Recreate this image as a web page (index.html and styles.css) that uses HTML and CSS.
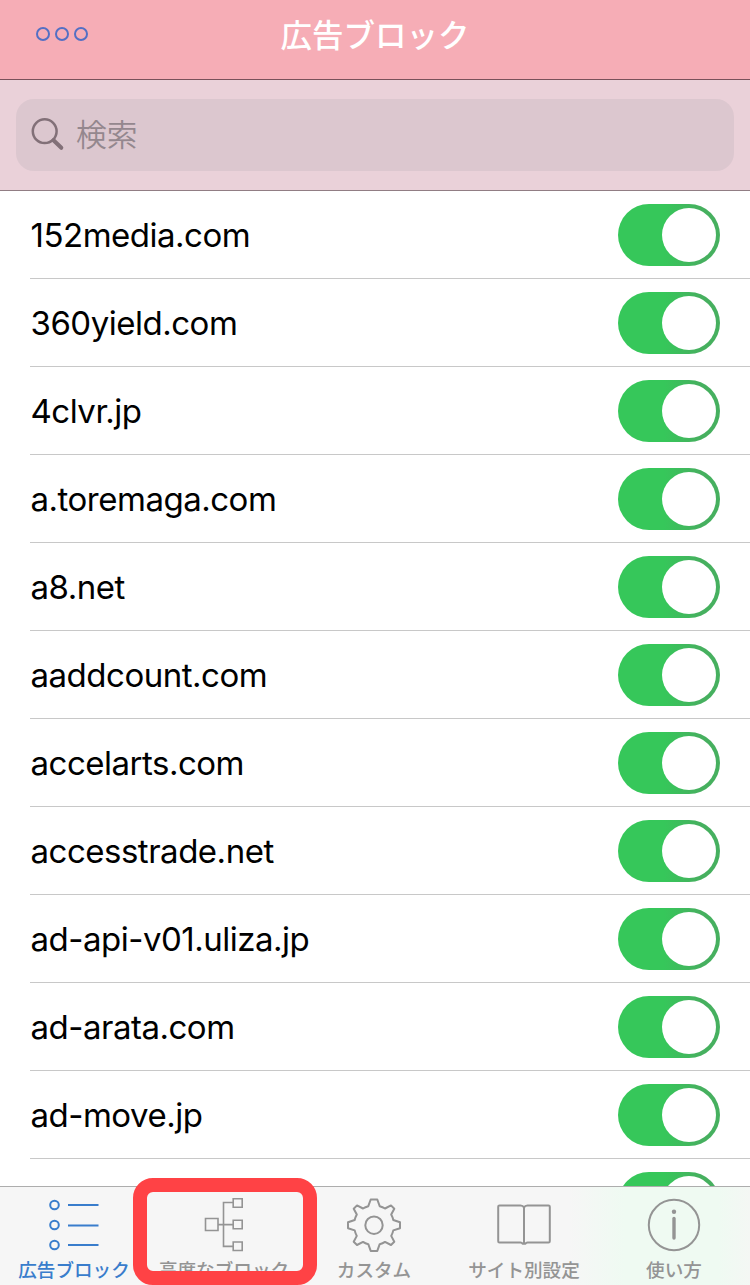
FILE: index.html
```html
<!DOCTYPE html>
<html lang="ja">
<head>
<meta charset="utf-8">
<title>広告ブロック</title>
<link rel="stylesheet" href="styles.css">
</head>
<body>
<div class="app">
  <header class="nav">
    <svg class="more" width="54" height="16" viewBox="0 0 54 16"><circle cx="8" cy="8" r="6"/><circle cx="27" cy="8" r="6"/><circle cx="46" cy="8" r="6"/></svg>
    <h1 class="title">広告ブロック</h1>
  </header>
  <div class="search">
    <div class="field">
      <svg class="glass" width="34" height="34" viewBox="0 0 34 34"><circle cx="13.7" cy="13.2" r="11.9"/><path class="handle" d="M22.5 22.2L30.3 29.8"/></svg>
      <span class="placeholder">検索</span>
    </div>
  </div>
  <main class="list">
    <div class="row"><span class="domain">152media.com</span><i class="toggle"></i></div>
    <div class="row"><span class="domain">360yield.com</span><i class="toggle"></i></div>
    <div class="row"><span class="domain">4clvr.jp</span><i class="toggle"></i></div>
    <div class="row"><span class="domain">a.toremaga.com</span><i class="toggle"></i></div>
    <div class="row"><span class="domain">a8.net</span><i class="toggle"></i></div>
    <div class="row"><span class="domain">aaddcount.com</span><i class="toggle"></i></div>
    <div class="row"><span class="domain">accelarts.com</span><i class="toggle"></i></div>
    <div class="row"><span class="domain">accesstrade.net</span><i class="toggle"></i></div>
    <div class="row"><span class="domain">ad-api-v01.uliza.jp</span><i class="toggle"></i></div>
    <div class="row"><span class="domain">ad-arata.com</span><i class="toggle"></i></div>
    <div class="row"><span class="domain">ad-move.jp</span><i class="toggle"></i></div>
    <div class="row"><span class="domain"></span><i class="toggle"></i></div>
  </main>
  <nav class="tabs">
    <div class="tab active">
      <svg class="icon" width="60" height="60" viewBox="0 0 60 60"><g><circle cx="10.5" cy="10" r="4.3"/><circle cx="10.5" cy="30" r="4.3"/><circle cx="10.5" cy="50" r="4.3"/><path d="M24 10H54.5M24 30.5H54.5M24 50H54.5"/></g></svg>
      <span class="label">広告ブロック</span>
    </div>
    <div class="tab">
      <svg class="icon thin" width="60" height="60" viewBox="0 0 60 60"><path d="M11.5 23.5h12.5v12H11.5zM39.2 3.8h9v8.5h-9zM39.2 25.3h9v8.5h-9zM39.2 47h9v8.5h-9zM24 29.6H39M39 7.5H29.5V51.4H39"/></svg>
      <span class="label">高度なブロック</span>
    </div>
    <div class="tab">
      <svg class="icon" width="60" height="60" viewBox="0 0 60 60"><g transform="translate(30 30.2)"><circle r="8.7"/><path d="M-3.3 -25.7H3.3L5.7 -19Q8.7 -18.2 11 -16.7L17 -19.8L20.3 -16.5L17.2 -10.7Q18.7 -8 19.3 -5.2L26 -3V3L19.3 5.2Q18.7 8 17.2 10.7L20.3 16.5L17 19.8L11 16.7Q8.7 18.2 5.7 19L3.3 25.7H-3.3L-5.7 19Q-8.7 18.2 -11 16.7L-17 19.8L-20.3 16.5L-17.2 10.7Q-18.7 8 -19.3 5.2L-26 3V-3L-19.3 -5.2Q-18.7 -8 -17.2 -10.7L-20.3 -16.5L-17 -19.8L-11 -16.7Q-8.7 -18.2 -5.7 -19Z"/></g></svg>
      <span class="label">カスタム</span>
    </div>
    <div class="tab">
      <svg class="icon" width="60" height="60" viewBox="0 0 60 60"><path d="M30 12.5Q29 10.5 26.5 10.5H5.5Q4.2 10.5 4.2 11.8V46.2Q4.2 47.5 5.5 47.5H26.5Q28 47.5 28.5 48.7H31.5Q32 47.5 33.5 47.5H54.5Q55.8 47.5 55.8 46.2V11.8Q55.8 10.5 54.5 10.5H33.5Q31 10.5 30 12.5V48.7"/></svg>
      <span class="label">サイト別設定</span>
    </div>
    <div class="tab">
      <svg class="icon" width="60" height="60" viewBox="0 0 60 60"><circle cx="30" cy="30" r="25.2"/><circle class="dot" cx="30" cy="16.7" r="2.2"/><path class="stem" d="M30 23.5V43"/></svg>
      <span class="label">使い方</span>
    </div>
  </nav>
  <div class="highlight"></div>
</div>
</body>
</html>
```
FILE: styles.css
```css
* { box-sizing: border-box; }
body { margin: 0; background: #fff; font-family: Inter, "Noto Sans CJK JP", sans-serif; }
svg { display: block; fill: none; }
.app { position: relative; width: 750px; height: 1285px; display: flex; flex-direction: column; overflow: hidden; }
.nav { flex: none; height: 80px; padding: 0 35px; display: grid; grid-template-columns: 1fr auto 1fr; background: #f6adb6; border-bottom: 1px solid #79515a; }
.more { margin-top: 26px; stroke: #536fc4; stroke-width: 2; }
.title { margin: 0; padding-top: 10px; font: 500 31.5px/46px "Noto Sans CJK JP", sans-serif; color: #fff; }
.search { flex: none; height: 111px; padding: 19px 16px 0; background: #ead1d9; border-bottom: 1px solid #917d84; }
.field { height: 72px; padding-left: 15px; display: flex; align-items: center; gap: 11px; border-radius: 18px; background: #dcc7cf; }
.glass { stroke: #827078; stroke-width: 2.5; }
.handle { stroke-width: 4; stroke-linecap: round; }
.placeholder { padding-bottom: 4px; font: 350 30.8px/46px "Noto Sans CJK JP", sans-serif; color: #94878e; }
.list { flex: 1; min-height: 0; overflow: hidden; }
.row { height: 88px; margin-left: 30px; padding-right: 30px; display: flex; align-items: center; justify-content: space-between; border-bottom: 1px solid #c8c8c8; }
.domain { padding-left: 0.5px; font-size: 33px; line-height: 44px; letter-spacing: -0.49px; color: #000; }
.toggle { width: 102px; height: 62px; padding: 4px; border-radius: 31px; display: flex; justify-content: flex-end; background: linear-gradient(90deg, #36c75a 45%, #46b05f 80%); }
.toggle::before { content: ""; width: 54px; height: 54px; border-radius: 50%; background: #fff; }
.tabs { flex: none; height: 99px; padding-right: 2px; display: grid; grid-template-columns: repeat(5, 150px); margin-left: -1px; border-top: 1px solid #adadad; background: linear-gradient(90deg, #f6f6f6 570px, #effaf2 625px, #effaf2 720px, #f4f7f4 751px); color: #949494; }
.tab { padding-top: 8px; display: flex; flex-direction: column; align-items: center; }
.icon { stroke: currentColor; stroke-width: 2; stroke-linejoin: round; }
.thin { stroke-width: 1.6; stroke-linejoin: miter; }
.dot { fill: currentColor; stroke: none; }
.stem { stroke-width: 3.4; stroke-linecap: round; }
.label { font: 500 18.6px/28px "Noto Sans CJK JP", sans-serif; white-space: nowrap; }
.active { color: #397dcc; }
.highlight { position: absolute; left: 133px; top: 1178px; width: 184px; height: 107px; border: 14px solid #ff4245; border-radius: 20px; }
```
